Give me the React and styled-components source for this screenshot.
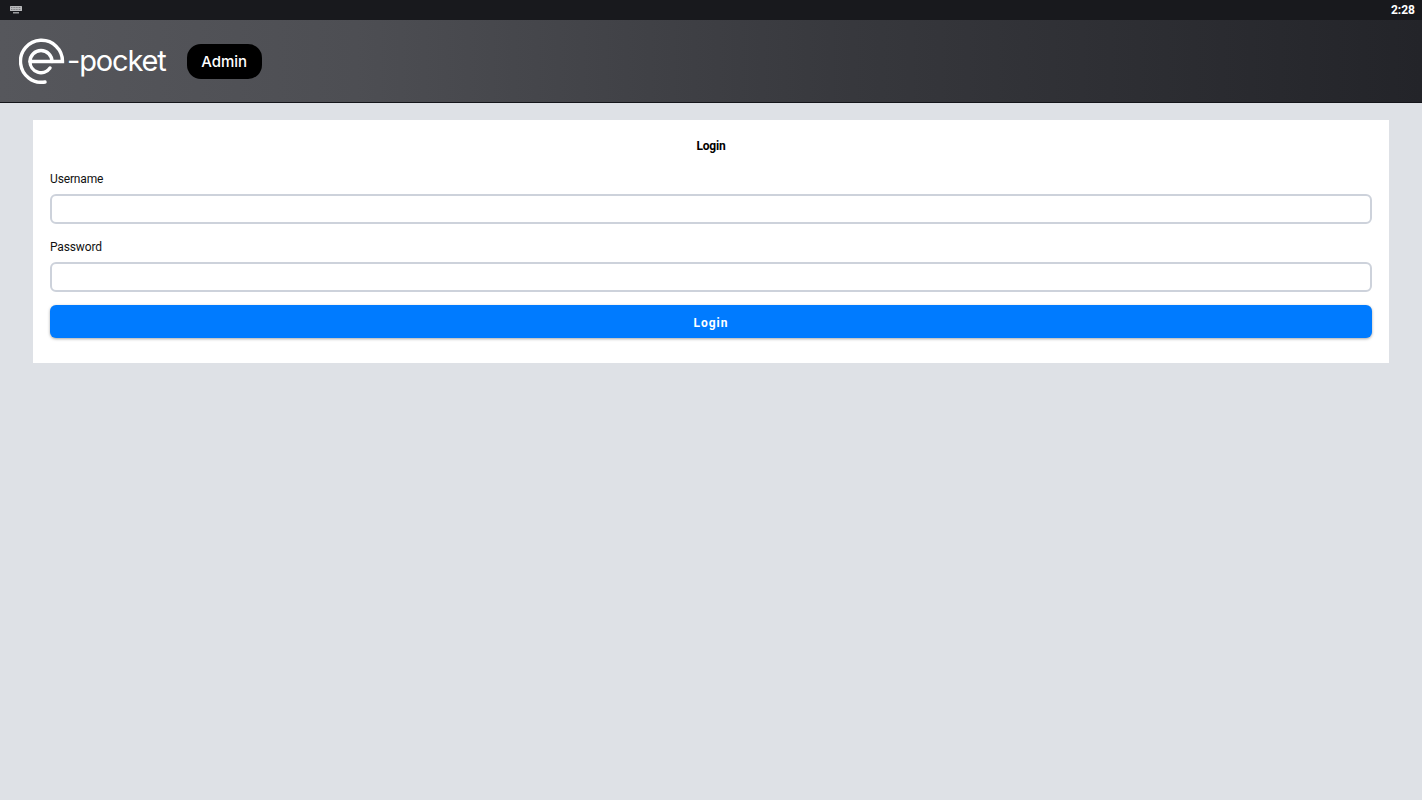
import React from "react"
import styled, { createGlobalStyle } from "styled-components"

const GlobalStyle = createGlobalStyle`
  html, body {
    margin: 0;
    padding: 0;
    height: 100%;
    background: #dee1e6;
    font-family: Roboto, "Liberation Sans", sans-serif;
  }
`
const Page = styled.div`
  width: 100%;
  min-height: 800px;
  display: flex;
  flex-direction: column;
  background: #dee1e6;
`
const StatusBar = styled.div`
  height: 20px;
  display: flex;
  align-items: center;
  justify-content: space-between;
  padding: 0 7px 0 10px;
  background: #18191d;
  color: #ffffff;
`
const Clock = styled.span`
  font-size: 12px;
  font-weight: 700;
`
const Header = styled.header`
  height: 83px;
  box-sizing: border-box;
  display: flex;
  align-items: center;
  padding-left: 19px;
  background: linear-gradient(90deg, #56575c 0%, #4d4e53 25%, #37383d 60%, #232429 100%);
  border-bottom: 1px solid #14151a;
`
const Logo = styled.div`
  display: flex;
  align-items: center;
  color: #ffffff;
`
const LogoText = styled.span`
  margin-left: 2px;
  font-family: Inter, sans-serif;
  font-weight: 400;
  font-size: 29px;
  line-height: 1;
  letter-spacing: -1.15px;
  position: relative;
  top: -1px;
`
const Badge = styled.div`
  margin-left: 21px;
  width: 75px;
  height: 35px;
  display: flex;
  align-items: center;
  justify-content: center;
  border-radius: 14px;
  background: #000000;
  color: #ffffff;
  font-family: Inter, sans-serif;
  font-size: 15px;
  font-weight: 500;
`
const Main = styled.main`
  padding: 17px 33px;
`
const Card = styled.form`
  height: 243px;
  box-sizing: border-box;
  padding: 18px 17px 17px;
  background: #ffffff;
`
const Title = styled.div`
  text-align: center;
  font-size: 12px;
  font-weight: 700;
  line-height: 16px;
  letter-spacing: -0.2px;
  color: #000000;
`
const Field = styled.div`
  display: flex;
  flex-direction: column;
  margin-top: ${(p) => p.$top}px;
`
const Label = styled.label`
  font-size: 12px;
  line-height: 16px;
  letter-spacing: -0.15px;
  color: #111111;
  margin-bottom: 7px;
`
const Input = styled.input`
  height: 30px;
  box-sizing: border-box;
  border: 2px solid #cdd2db;
  border-radius: 6px;
  background: #ffffff;
  outline: none;
`
const Submit = styled.button`
  width: 100%;
  height: 33px;
  margin-top: 13px;
  padding: 2px 0 0;
  border: none;
  border-radius: 6px;
  background: #007bff;
  color: #ffffff;
  font-family: Roboto, sans-serif;
  font-size: 12px;
  font-weight: 700;
  letter-spacing: 1px;
  box-shadow: 0 1px 3px rgba(0, 0, 0, 0.35);
`

const KeyboardIcon = () => (
  <svg width="12" height="8" viewBox="0 0 12 8">
    <rect x="0" y="0" width="12" height="5" rx="0.5" fill="#b9babc" />
    <path d="M1 1.5h10M1 3.5h10" stroke="#55565a" strokeWidth="0.6" strokeDasharray="1 0.6" />
    <rect x="3" y="6" width="6" height="1.5" fill="#9a9b9e" />
  </svg>
)

const LogoMark = () => (
  <svg width="46" height="46" viewBox="0 0 46 46" fill="none" stroke="#fff" strokeWidth="3.4" strokeLinecap="round">
    <path d="M11 23.5H43.5A21 21 0 1 0 26 44" />
    <path d="M11 23.5A11 11 0 0 1 33 23.5M11 23.5A11 11 0 0 0 31 30" />
  </svg>
)

const App = () => {
  return (
    <Page>
      <GlobalStyle />
      <StatusBar>
        <KeyboardIcon />
        <Clock>2:28</Clock>
      </StatusBar>
      <Header>
        <Logo>
          <LogoMark />
          <LogoText>-pocket</LogoText>
        </Logo>
        <Badge>Admin</Badge>
      </Header>
      <Main>
        <Card onSubmit={(e) => e.preventDefault()}>
          <Title>Login</Title>
          <Field $top={17}>
            <Label>Username</Label>
            <Input type="text" />
          </Field>
          <Field $top={15}>
            <Label>Password</Label>
            <Input type="password" />
          </Field>
          <Submit>Login</Submit>
        </Card>
      </Main>
    </Page>
  )
}

export default App
